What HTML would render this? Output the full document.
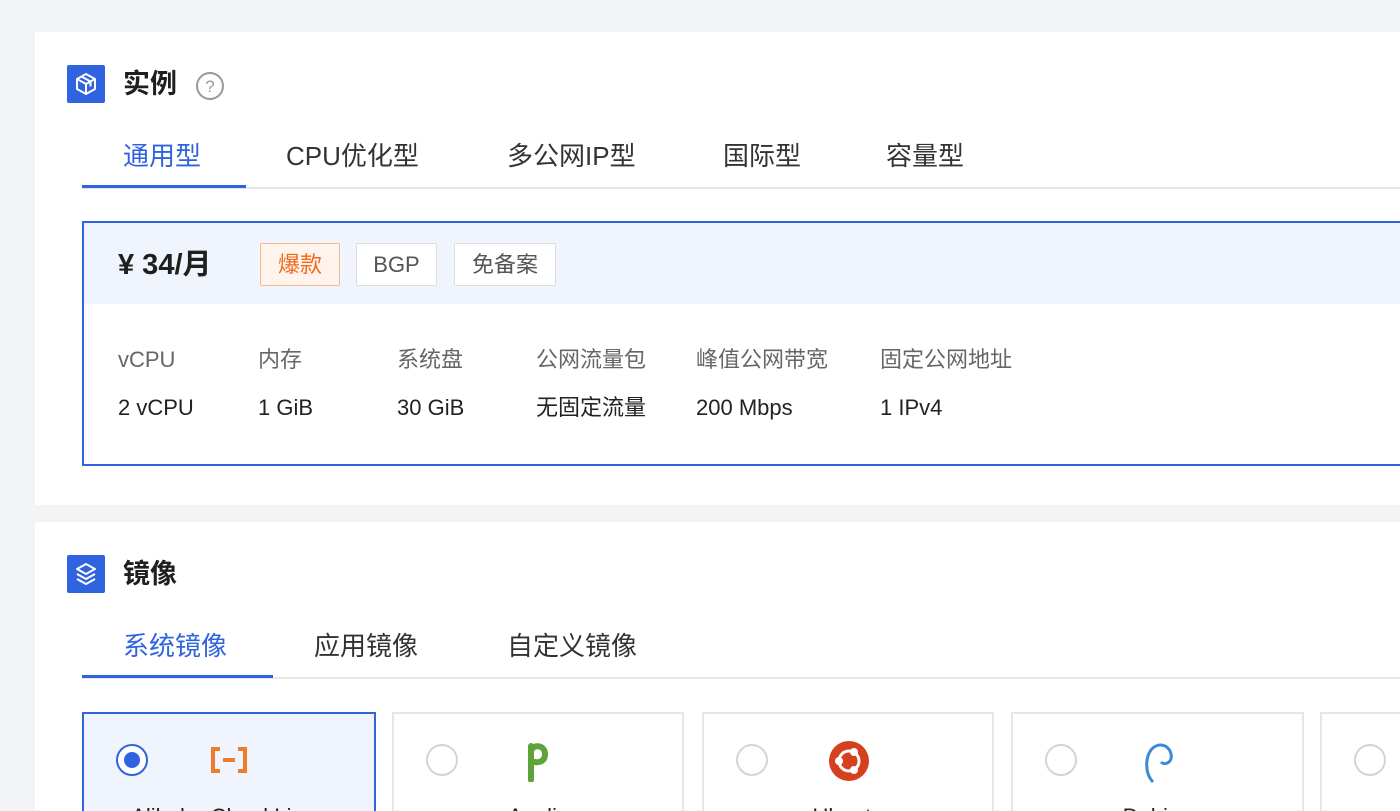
<!DOCTYPE html>
<html><head><meta charset="utf-8"><style>
*{margin:0;padding:0;box-sizing:border-box}
html,body{width:1400px;height:811px;overflow:hidden}
body{background:#f3f4f6;font-family:"Liberation Sans","Noto Sans CJK SC",sans-serif;color:#222;position:relative}
.abs{position:absolute}
.panel{position:absolute;left:35px;right:0;background:#fff}
.ico{position:absolute;width:38px;height:38px;background:#2f63e0;border-radius:2px}
.h{position:absolute;font-size:27px;font-weight:bold;color:#1f1f1f;line-height:36px}
.tab{position:absolute;font-size:26px;color:#333;line-height:30px}
.tab.on{color:#2f63e0}
.line{position:absolute;height:2px;background:#e8e8e8;right:0}
.ul{position:absolute;height:3px;background:#2f63e0}
.tag{position:absolute;top:243px;height:43px;border:1px solid #ddd;background:#fff;font-size:22px;color:#555;line-height:41px;text-align:center;border-radius:2px}
.lab{position:absolute;top:345px;font-size:22px;color:#666;line-height:30px}
.val{position:absolute;top:393px;font-size:22px;color:#222;line-height:30px}
.card{position:absolute;top:712px;height:120px;border:2px solid #e6e6e6;background:#fff}
.radio{position:absolute;left:32px;top:30px;width:32px;height:32px;border:2px solid #d4d4d4;border-radius:50%}
.nm{position:absolute;top:88px;left:0;right:0;text-align:center;font-size:22px;color:#222;line-height:30px}
</style></head><body>
<div class="panel" style="top:32px;height:473px"></div>
<div class="panel" style="top:522px;height:300px"></div>

<div class="ico" style="left:67px;top:65px"><svg width="38" height="38" viewBox="0 0 38 38"><g fill="none" stroke="#fff" stroke-width="2" stroke-linejoin="round"><path d="M19 9l9 5v10l-9 5-9-5V14z"/><path d="M10 14l9 5 9-5M19 19v10"/><path d="M14.5 11.5l9 5v5"/></g></svg></div>
<div class="h" style="left:123px;top:66px">实例</div>
<svg class="abs" style="left:195px;top:71px" width="30" height="30" viewBox="0 0 30 30"><circle cx="15" cy="15" r="13" fill="none" stroke="#999" stroke-width="2"/><text x="15" y="21" text-anchor="middle" font-size="17" fill="#999" font-family="Liberation Sans">?</text></svg>

<div class="tab on" style="left:123px;top:141px">通用型</div>
<div class="tab" style="left:286px;top:141px">CPU优化型</div>
<div class="tab" style="left:507px;top:141px">多公网IP型</div>
<div class="tab" style="left:723px;top:141px">国际型</div>
<div class="tab" style="left:886px;top:141px">容量型</div>
<div class="line" style="left:82px;top:187px"></div>
<div class="ul" style="left:82px;top:185px;width:164px"></div>

<div class="abs" style="left:82px;top:221px;width:1330px;height:245px;border:2px solid #2f63e0;background:#fff">
<div style="height:81px;background:#f0f4fd"></div></div>
<div class="abs" style="left:118px;top:247px;font-size:29px;font-weight:bold;color:#1f1f1f;line-height:36px">¥ 34/月</div>
<div class="tag" style="left:260px;width:80px;border-color:#f5b98f;background:#fff4ec;color:#ee6a1d">爆款</div>
<div class="tag" style="left:356px;width:81px">BGP</div>
<div class="tag" style="left:454px;width:102px">免备案</div>

<div class="lab" style="left:118px">vCPU</div><div class="val" style="left:118px">2 vCPU</div>
<div class="lab" style="left:258px">内存</div><div class="val" style="left:258px">1 GiB</div>
<div class="lab" style="left:397px">系统盘</div><div class="val" style="left:397px">30 GiB</div>
<div class="lab" style="left:536px">公网流量包</div><div class="val" style="left:536px">无固定流量</div>
<div class="lab" style="left:696px">峰值公网带宽</div><div class="val" style="left:696px">200 Mbps</div>
<div class="lab" style="left:880px">固定公网地址</div><div class="val" style="left:880px">1 IPv4</div>

<div class="ico" style="left:67px;top:555px"><svg width="38" height="38" viewBox="0 0 38 38"><g fill="none" stroke="#fff" stroke-width="2" stroke-linejoin="round"><path d="M19 9l9 5-9 5-9-5z"/><path d="M10 19l9 5 9-5M10 24l9 5 9-5"/></g></svg></div>
<div class="h" style="left:123px;top:556px">镜像</div>
<div class="tab on" style="left:123px;top:631px">系统镜像</div>
<div class="tab" style="left:314px;top:631px">应用镜像</div>
<div class="tab" style="left:507px;top:631px">自定义镜像</div>
<div class="line" style="left:82px;top:677px"></div>
<div class="ul" style="left:82px;top:675px;width:191px"></div>

<div class="card" style="left:82px;width:294px;border-color:#2f63e0;background:#f0f4fd">
<div class="radio" style="border-color:#2f63e0;background:#fff"><div style="position:absolute;left:6px;top:6px;width:16px;height:16px;border-radius:50%;background:#2f63e0"></div></div>
<svg class="abs" style="left:124px;top:32px" width="42" height="28" viewBox="0 0 42 28"><g fill="none" stroke="#ee7a2e" stroke-width="4"><path d="M12 3H5v22h7M30 3h7v22h-7"/><path d="M15 14h12"/></g></svg>
<div class="nm">Alibaba Cloud Linux</div></div>
<div class="card" style="left:392px;width:292px"><div class="radio"></div>
<svg class="abs" style="left:130px;top:24px" width="30" height="44" viewBox="0 0 30 44"><path d="M7 42V8M7 14c0-8 14-8 14 2s-10 8-10 8" fill="none" stroke="#5ea33a" stroke-width="6" stroke-linecap="round"/></svg>
<div class="nm">Anolis</div></div>
<div class="card" style="left:702px;width:292px"><div class="radio"></div>
<svg class="abs" style="left:124px;top:26px" width="42" height="42" viewBox="0 0 42 42"><circle cx="21" cy="21" r="20" fill="#d5401f"/><circle cx="21" cy="21" r="10" fill="none" stroke="#fff" stroke-width="3"/><circle cx="11" cy="21" r="4" fill="#fff"/><circle cx="26" cy="12" r="4" fill="#fff"/><circle cx="26" cy="30" r="4" fill="#fff"/></svg>
<div class="nm">Ubuntu</div></div>
<div class="card" style="left:1011px;width:293px"><div class="radio"></div>
<svg class="abs" style="left:128px;top:24px" width="34" height="46" viewBox="0 0 34 46"><path d="M12 44C4 36 4 20 10 12c6-8 18-6 20 4 2 8-6 12-10 8" fill="none" stroke="#3c8ad6" stroke-width="3"/></svg>
<div class="nm">Debian</div></div>
<div class="card" style="left:1320px;width:120px"><div class="radio"></div></div>
</body></html>
